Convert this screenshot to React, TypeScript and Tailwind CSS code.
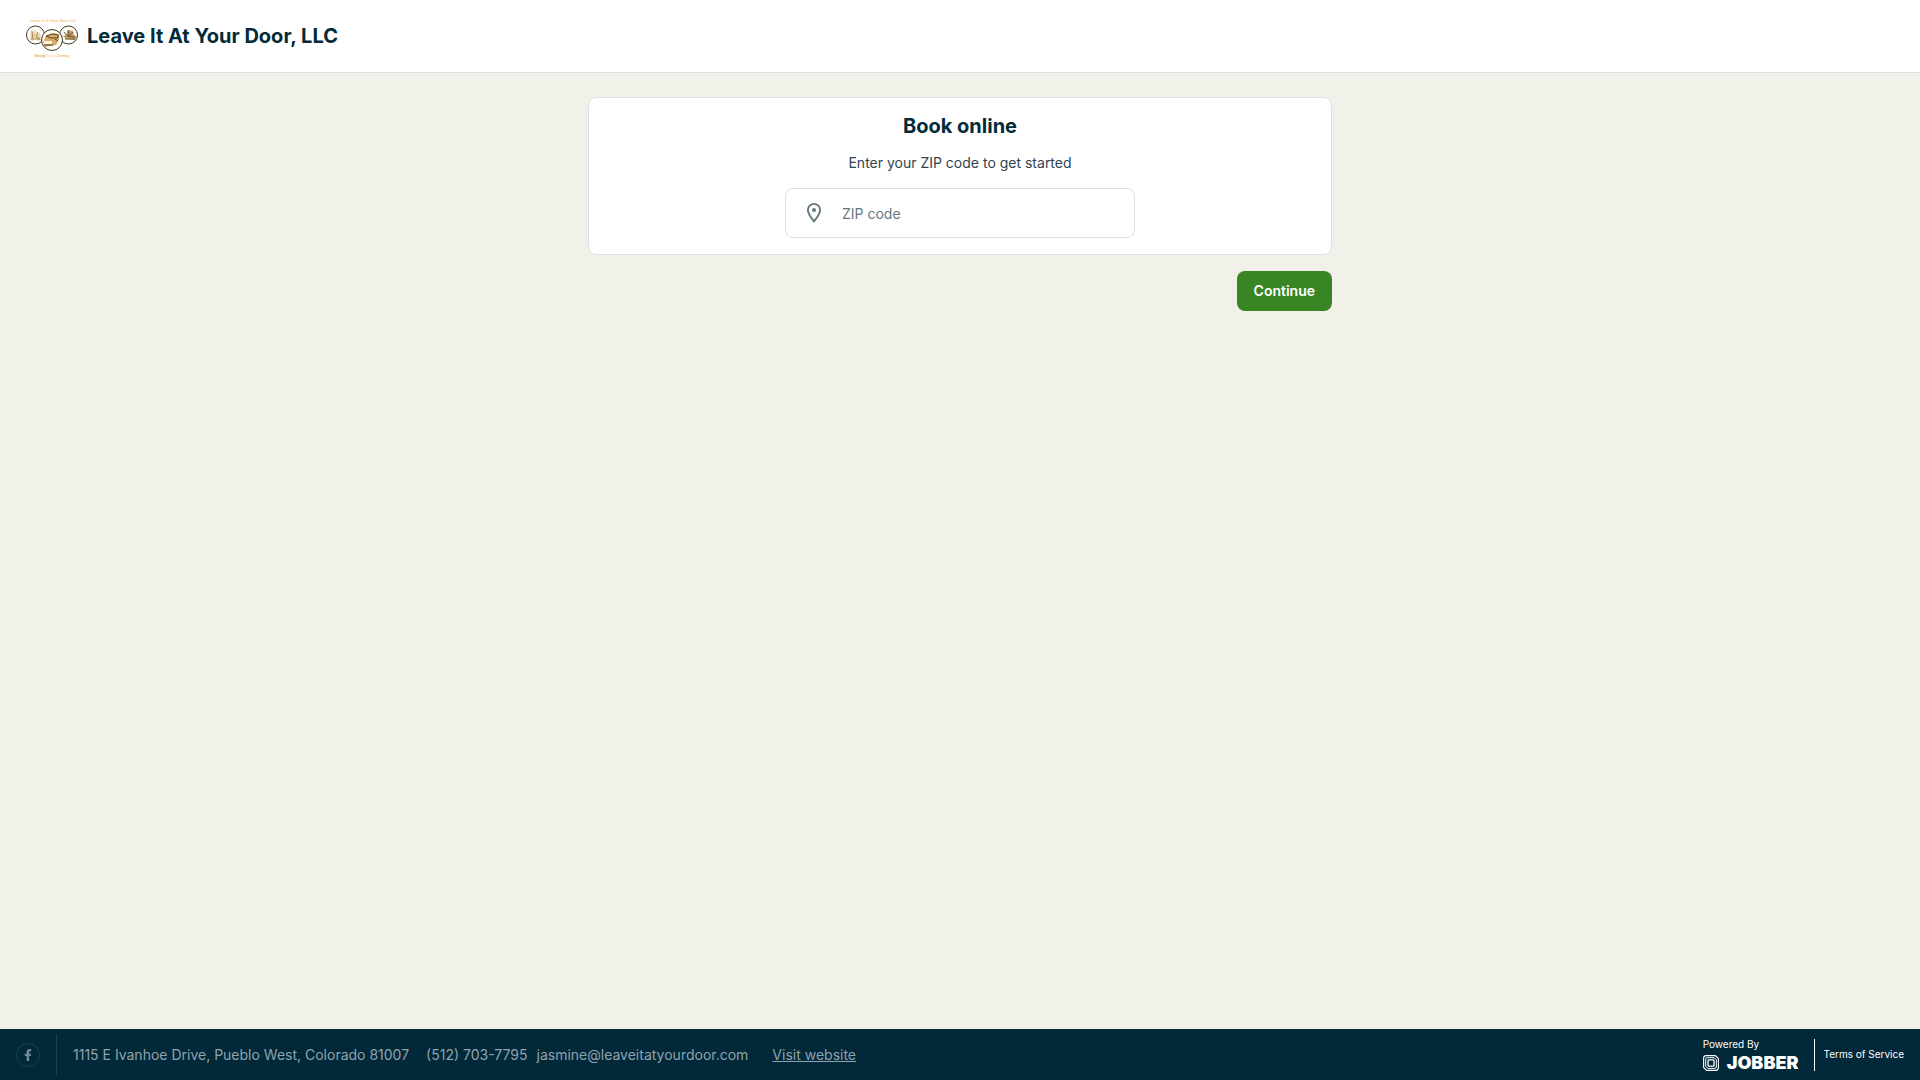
import React, { useState } from 'react';

const COMPANY = {
  name: 'Leave It At Your Door, LLC',
  address: '1115 E Ivanhoe Drive, Pueblo West, Colorado 81007',
  phone: '(512) 703-7795',
  email: 'jasmine@leaveitatyourdoor.com',
};

const CompanyLogo = () => (
  <svg viewBox="0 0 56 56" className="w-14 h-14 shrink-0 font-['Roboto',sans-serif]" role="img" aria-label={COMPANY.name}>
    <text x="29" y="14" textAnchor="middle" fontSize="4" fontWeight="700" fill="#fac982">Leave It At Your Door LLC</text>
    <g fill="#fffdf8" stroke="#3f3627" strokeWidth="1">
      <circle cx="11.500" cy="27" r="9" />
      <circle cx="44.500" cy="27" r="9" />
      <circle cx="28" cy="32" r="10.500" />
    </g>
    {/* boxes */}
    <path d="M6 31l1-8 2 2 2-4 2 5 3-1 1 7-3 1-3-4-2 4-2-1z" fill="#e8d5b0" />
    <path d="M8 23l1 8M14 24l-2 5 4 2M7 31h9" stroke="#a8854f" strokeWidth="1" fill="none" />
    {/* truck */}
    <path d="M19 34l3-6 7-3 6 1v5l-3 6-11 2z" fill="#d9ab66" />
    <path d="M22 28l6-2 6 1v3h-7zM20 37h9M31 31l3 2" stroke="#5b4527" strokeWidth="1" fill="none" />
    <path d="M20 33h8v3h-8z" fill="#fff3dc" />
    {/* loader */}
    <path d="M39 28l3-1 2-5 5 1 1 4 3 2-2 3-9-1z" fill="#c39d63" />
    <path d="M40 24l3 4 8 1M44 22l1 6 4-4M41 31h10" stroke="#6b5636" strokeWidth="1" fill="none" />
    <text x="28" y="49" textAnchor="middle" fontSize="3" fontWeight="700" fill="#f7bd6b">
      <tspan fill="#eeae53">Moving</tspan> <tspan fill="#fde0b8">Hauling</tspan> Cleaning
    </text>
  </svg>
);

const PinIcon = () => (
  <svg viewBox="0 0 24 24" className="w-6 h-6 shrink-0" fill="none" aria-hidden="true">
    <path d="M12 20.400c-1-1.500-6.100-6.900-6.100-11.400a6.100 6.100 0 0 1 12.200 0c0 4.500-5.100 9.900-6.100 11.400z" stroke="#65787f" strokeWidth="1.900" strokeLinejoin="round" />
    <circle cx="12" cy="9" r="2" fill="#65787f" />
  </svg>
);

const FacebookIcon = () => (
  <svg viewBox="0 0 24 24" className="w-6 h-6" aria-hidden="true">
    <circle cx="12" cy="12" r="11.500" fill="none" stroke="#1c4251" />
    <path d="M10.600 18v-5H8.800v-2.300h1.800V9.400c0-2.200 1.100-3.400 3-3.400h1.600v2.300h-1.100c-.7 0-1 .3-1 1v1.400h2.100l-.3 2.300h-1.800v5z" fill="#6f8995" />
  </svg>
);

const JobberMark = () => (
  <svg viewBox="0 0 16 16" className="w-4 h-4 shrink-0" fill="none" stroke="#ffffff" aria-hidden="true">
    <path d="M3 .6h9.400l3 3v8.800a3 3 0 0 1-3 3H3.600l-3-3V3.200A2.600 2.600 0 0 1 3 .6z" strokeWidth="1.100" />
    <path d="M4.200 2.700h7.100l2 2V12a1.500 1.500 0 0 1-1.500 1.400H4.700l-2-2V4.200a1.500 1.500 0 0 1 1.500-1.500z" strokeWidth="1" />
    <rect x="5" y="4.900" width="6" height="6.300" rx=".8" strokeWidth="1.300" />
  </svg>
);

const Header = () => (
  <header className="flex items-center h-[73px] pl-6 bg-white border-b border-[#dadfe1]">
    <CompanyLogo />
    <h1 className="ml-[7px] text-xl font-bold">{COMPANY.name}</h1>
  </header>
);

const Footer = () => (
  <footer className="flex items-center justify-between h-[51px] px-4 bg-[#012939] text-sm text-[#8fa3ad]">
    <div className="flex items-center">
      <a href="#facebook" aria-label="Facebook">
        <FacebookIcon />
      </a>
      <div className="w-px h-[42px] mx-4 bg-[#1c4251]"></div>
      <span>{COMPANY.address}</span>
      <a href="tel:5127037795" className="ml-[17px]">{COMPANY.phone}</a>
      <a href={`mailto:${COMPANY.email}`} className="ml-[9px]">{COMPANY.email}</a>
      <a href="#website" className="ml-6 underline">Visit website</a>
    </div>
    <div className="flex items-center text-white">
      <a href="#jobber" className="block">
        <span className="block text-[10px] leading-4">Powered By</span>
        <span className="flex items-center gap-2 h-[22px]">
          <JobberMark />
          <span className="text-lg leading-5 font-black">JOBBER</span>
        </span>
      </a>
      <div className="w-px h-8 ml-4 mr-2 bg-white"></div>
      <a href="#terms" className="text-[10px]">Terms of Service</a>
    </div>
  </footer>
);

const App: React.FC = () => {
  const [zip, setZip] = useState('');

  return (
    <div className="flex flex-col min-h-screen bg-[#f1f0e9] text-[#032b3a] font-['Inter',sans-serif]">
      <Header />
      <main className="grow px-4 pt-6">
        <form className="max-w-[744px] mx-auto" onSubmit={e => e.preventDefault()}>
          <div className="flex flex-col items-center px-4 py-4 bg-white border border-[#dadfe1] rounded-lg">
            <h2 className="text-xl leading-6 font-bold">Book online</h2>
            <label htmlFor="zip" className="my-4 text-sm leading-[18px] text-[#2f444e]">Enter your ZIP code to get started</label>
            <div className="flex items-center w-full max-w-[350px] h-[50px] pl-4 border border-[#dadfe1] rounded-lg">
              <PinIcon />
              <input
                id="zip"
                type="text"
                placeholder="ZIP code"
                value={zip}
                onChange={e => setZip(e.target.value)}
                className="grow min-w-0 ml-4 h-full text-sm outline-none placeholder:text-[#65787f]"
              />
            </div>
          </div>
          <div className="flex justify-end mt-4">
            <button type="submit" className="h-10 px-[17px] rounded-lg bg-[#388523] text-sm font-semibold text-white">
              Continue
            </button>
          </div>
        </form>
      </main>
      <Footer />
    </div>
  );
};

export default App;
